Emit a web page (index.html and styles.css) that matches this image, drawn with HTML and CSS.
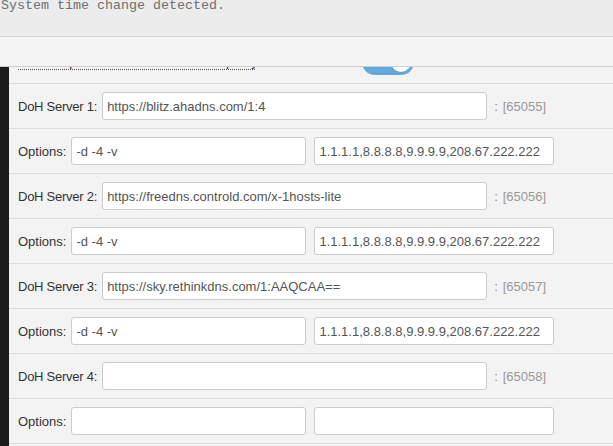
FILE: index.html
```html
<!DOCTYPE html>
<html>
<head>
<meta charset="utf-8">
<link rel="stylesheet" href="styles.css">
</head>
<body>
<div class="notice">
  <div class="notice-msg">System time change detected.</div>
  <div class="notice-bar"></div>
</div>
<div class="page">
  <div class="strip"></div>
  <div class="main">
    <div class="row">
      <span class="hint">Enable upstream DNS over HTTPS proxy (dnsproxy):</span>
      <span class="toggle"><span class="knob"></span></span>
    </div>
    <div class="row">
      <label class="lbl srv">DoH Server 1:</label>
      <input class="inp url" value="https://blitz.ahadns.com/1:4">
      <span class="colon">:</span><span class="port">[65055]</span>
    </div>
    <div class="row">
      <label class="lbl">Options:</label>
      <input class="inp opt" value="-d -4 -v">
      <input class="inp boot" value="1.1.1.1,8.8.8.8,9.9.9.9,208.67.222.222">
    </div>
    <div class="row">
      <label class="lbl srv">DoH Server 2:</label>
      <input class="inp url" value="https://freedns.controld.com/x-1hosts-lite">
      <span class="colon">:</span><span class="port">[65056]</span>
    </div>
    <div class="row">
      <label class="lbl">Options:</label>
      <input class="inp opt" value="-d -4 -v">
      <input class="inp boot" value="1.1.1.1,8.8.8.8,9.9.9.9,208.67.222.222">
    </div>
    <div class="row">
      <label class="lbl srv">DoH Server 3:</label>
      <input class="inp url" value="https://sky.rethinkdns.com/1:AAQCAA==">
      <span class="colon">:</span><span class="port">[65057]</span>
    </div>
    <div class="row">
      <label class="lbl">Options:</label>
      <input class="inp opt" value="-d -4 -v">
      <input class="inp boot" value="1.1.1.1,8.8.8.8,9.9.9.9,208.67.222.222">
    </div>
    <div class="row">
      <label class="lbl srv">DoH Server 4:</label>
      <input class="inp url" value="">
      <span class="colon">:</span><span class="port">[65058]</span>
    </div>
    <div class="row">
      <label class="lbl">Options:</label>
      <input class="inp opt" value="">
      <input class="inp boot" value="">
    </div>
  </div>
</div>
</body>
</html>
```

FILE: styles.css
```css
html, body {
  margin: 0;
  padding: 0;
  height: 100%;
  overflow: hidden;
  background: #f3f3f3;
  font-family: "Liberation Sans", Arial, sans-serif;
  font-size: 13px;
}

.notice {
  position: fixed;
  top: 0;
  left: 0;
  right: 0;
  z-index: 10;
}

.notice-msg {
  height: 36px;
  background: #ececec;
  border-bottom: 1px solid #d6d6d6;
  font-family: "Liberation Mono", "Courier New", monospace;
  font-size: 13.33px;
  line-height: 15px;
  color: #707070;
  padding-left: 1px;
  overflow: hidden;
}

.notice-msg::before {
  content: "";
  display: block;
  margin-top: -2px;
}

.notice-bar {
  height: 29px;
  background: #f4f4f4;
  border-bottom: 1px solid #cfcfcf;
}

.page {
  display: flex;
  min-height: 100%;
}

.strip {
  width: 9px;
  flex: none;
  background: #1b1b1b;
}

.main {
  flex: 1;
  padding-top: 39px;
  background: #f3f3f3;
}

.row {
  box-sizing: border-box;
  height: 45px;
  display: flex;
  align-items: center;
  padding-left: 9px;
  border-bottom: 1px solid #dddddd;
}

.hint {
  color: #333;
  line-height: 15px;
  border-bottom: 1px dotted #555;
  width: 237px;
  white-space: nowrap;
  overflow: hidden;
  position: relative;
  top: 1px;
}

.toggle {
  margin-left: 107px;
  width: 52px;
  height: 26px;
  border-radius: 13px;
  background: #5fa9de;
  display: flex;
  align-items: center;
  justify-content: flex-end;
  padding: 0 3px;
  box-sizing: border-box;
  position: relative;
  top: 1px;
}

.knob {
  width: 20px;
  height: 20px;
  border-radius: 50%;
  background: #fff;
}

.lbl {
  color: #333;
  margin-right: 5px;
  white-space: nowrap;
}

.srv {
  letter-spacing: -0.25px;
}

.inp {
  box-sizing: border-box;
  height: 28px;
  border: 1px solid #cccccc;
  border-radius: 3px;
  background: #fff;
  font-family: "Liberation Sans", Arial, sans-serif;
  font-size: 13px;
  color: #555;
  padding: 0 4px;
  margin: 0;
  outline: none;
}

.url {
  width: 385px;
}

.opt {
  width: 235px;
}

.boot {
  width: 240px;
  margin-left: 8px;
}

.colon {
  color: #888;
  margin-left: 7px;
}

.port {
  color: #999;
  margin-left: 5px;
}
```
